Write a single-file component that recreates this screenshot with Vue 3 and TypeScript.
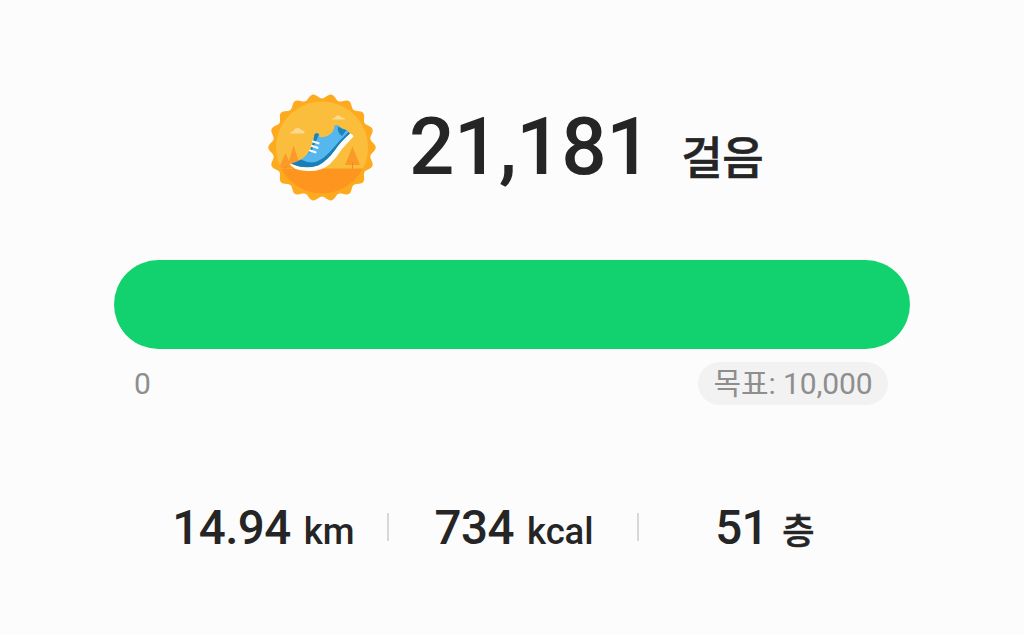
<script setup lang="ts">
interface Stat {
  value: string
  unit: string
  key: string
}

const stats: Stat[] = [
  { key: 'distance', value: '14.94', unit: 'km' },
  { key: 'energy', value: '734', unit: 'kcal' },
  { key: 'floors', value: '51', unit: '층' },
]

// Wavy outline of the medal, centred in a 120-unit box.
function medalOutline(teeth: number, phase: number): string {
  const points: string[] = []
  for (let i = 0; i < 360; i++) {
    const a = (i * Math.PI) / 180
    const wave = Math.cos(teeth * (a - (phase * Math.PI) / 180))
    const r = 51.4 + 2.3 * wave
    points.push(`${(60 + r * Math.sin(a)).toFixed(2)},${(59.5 - r * Math.cos(a)).toFixed(2)}`)
  }
  return points.join(' ')
}

const outline = medalOutline(18, 10)
</script>

<template>
  <main class="screen">
    <header class="summary">
      <svg class="medal" viewBox="0 0 120 120" aria-hidden="true">
        <defs>
          <clipPath id="disc"><circle cx="60" cy="59.5" r="46" /></clipPath>
        </defs>
        <polygon :points="outline" fill="#feaa1e" />
        <circle cx="60" cy="59.5" r="46" fill="#fbbd3c" />
        <g clip-path="url(#disc)">
          <path d="M17 80L23.500 65L30 80Z M25 80L31.500 57.500L39 80Z M83 77L90.500 58.500L98 77Z" fill="#fb9a28" />
          <path d="M90.500 74v8M23.500 78v4M31.500 78v4" stroke="#f08b20" stroke-width="1" />
          <rect x="10" y="80.500" width="100" height="30" fill="#fe951e" />
        </g>
        <path d="M28 45.500q1-2.500 3.500-2.500q1-3 4-3q3 0 3.500 2q3.500-.5 3.500 3.500Z M70 31.500q1-2 3-2q1-2.500 3.500-2q2.500 0 3 2q3 0 4 2Z" fill="#fcdb90" />
        <path d="M27.500 75.500Q30 82 45 83Q59 84 68 76Q75 69 80 61L91.500 48.500Q90.500 45.500 86.500 45L72 61L58 75L40 79Z" fill="#fffdf8" />
        <path d="M29.500 75.500Q38 73 43 68.500Q50 62 52.500 46.500Q54 44.500 57 46L57.500 49Q62 50 67 47Q72.500 43.500 72.500 37.500L75.500 37Q80 41 84.500 42L88 45.500Q79 53 73 62Q65 73 56 77.500Q42 81 29.500 75.500Z" fill="#56b6ee" />
        <path d="M29.500 75.500Q35 74 39 71.500Q47 76 55 73.500Q63 70 70 61.500Q77 53 86.500 44L88 45.500Q79 53 73 62Q65 73 56 77.500Q42 82 29.500 75.500Z" fill="#197fb8" />
        <path d="M52.500 46.500Q54 44.500 57 46L55.500 50L50.500 61Q48.500 64 46 66Q51 58 52.500 46.500Z M76 38.500Q80 41.500 84.500 42L80 48Q75 45 76 38.500Z" fill="#1b83b8" />
        <path d="M51 53.500l5.500 1.800M50 58l5.500 1.800M48 62.500l5.500 1.800" stroke="#f8fcff" stroke-width="2.100" stroke-linecap="round" />
      </svg>
      <h1 class="steps">21,181<span class="steps-unit">걸음</span></h1>
    </header>

    <section class="progress">
      <div class="bar"></div>
      <div class="scale">
        <span class="zero">0</span>
        <span class="goal">목표: 10,000</span>
      </div>
    </section>

    <ul class="stats">
      <li v-for="s in stats" :key="s.key" class="stat" :class="s.key">
        <span class="value">{{ s.value }}</span><span class="unit">{{ s.unit }}</span>
      </li>
    </ul>
  </main>
</template>

<style>
body {
  background: #fcfcfc;
}
</style>

<style scoped>
.screen {
  box-sizing: border-box;
  width: 1024px;
  height: 635px;
  padding-top: 88px;
  overflow: hidden;
  background: #fcfcfc;
  color: #252525;
  font-family: Roboto, "Noto Sans CJK KR", sans-serif;
}
.summary {
  display: flex;
  height: 120px;
  padding-left: 262px;
}
.medal {
  flex: none;
  width: 120px;
  height: 120px;
}
.steps {
  margin: 0 0 0 27px;
  font-size: 80px;
  font-weight: 500;
  line-height: 118px;
  letter-spacing: -0.5px;
  white-space: nowrap;
}
.steps-unit {
  position: relative;
  top: 1px;
  margin-left: 30px;
  font-size: 45px;
  line-height: 1;
  -webkit-text-stroke: 0.6px #252525;
}
.progress {
  width: 796px;
  margin: 52px 0 0 114px;
}
.bar {
  height: 89px;
  border-radius: 45px;
  background: #12d16f;
}
.scale {
  display: flex;
  justify-content: space-between;
  align-items: center;
  height: 43px;
  margin-top: 13px;
  padding: 0 22px 0 20px;
  color: #8e8e8e;
  font-size: 30px;
  line-height: 43px;
}
.goal {
  box-sizing: border-box;
  width: 190px;
  height: 43px;
  border-radius: 22px;
  background: #f2f2f2;
  letter-spacing: -0.1px;
  text-align: center;
  white-space: nowrap;
}
.stats {
  display: flex;
  width: 754px;
  height: 60px;
  margin: 93px 0 0 136px;
  padding: 0;
  list-style: none;
}
.stat {
  position: relative;
  display: flex;
  flex: 1;
  justify-content: center;
  align-items: baseline;
  font-weight: 500;
  line-height: 60px;
  white-space: nowrap;
}
.distance {
  padding-left: 2px;
}
.stat + .stat::before {
  content: "";
  position: absolute;
  top: 15px;
  left: -2px;
  width: 2px;
  height: 28px;
  background: #d8d8d8;
}
.value {
  font-size: 47.5px;
  letter-spacing: -0.5px;
}
.unit {
  margin-left: 13px;
  font-size: 36.5px;
  letter-spacing: -0.1px;
}
.floors .unit {
  margin-left: 14px;
  font-size: 35px;
  -webkit-text-stroke: 0.6px #252525;
}
</style>
